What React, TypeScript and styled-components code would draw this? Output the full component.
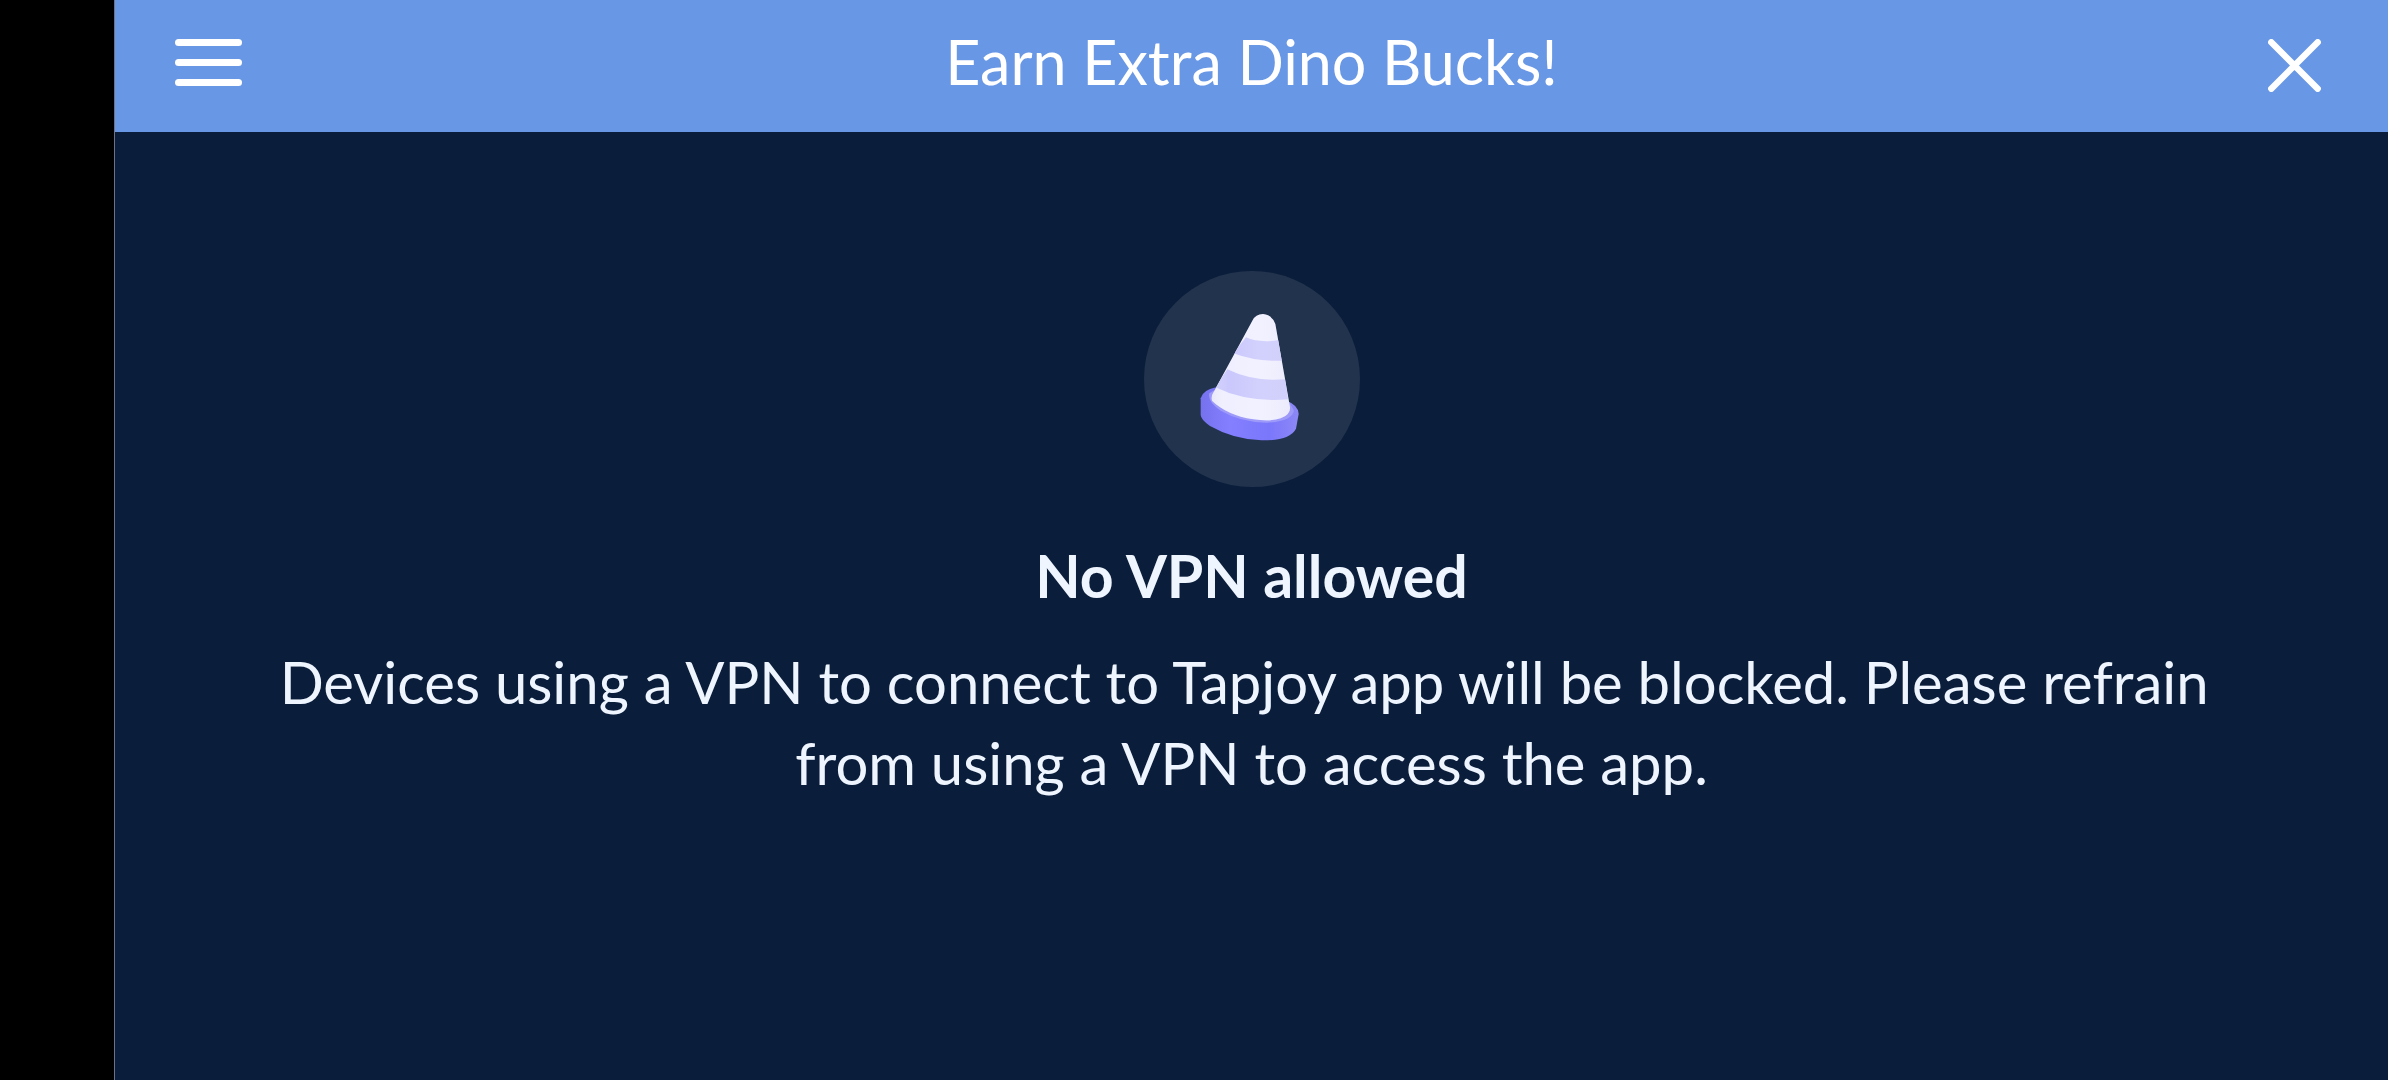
import React from "react";
import styled, { createGlobalStyle } from "styled-components";

const GlobalStyle = createGlobalStyle`
  *, *::before, *::after { box-sizing: border-box; }
  body {
    margin: 0;
    background: #000;
    font-family: Lato, "Liberation Sans", sans-serif;
  }
`;

const Screen = styled.div`
  min-height: 100vh;
  padding-left: 114px;
  display: flex;
  background: #000;
`;

const Panel = styled.div`
  flex: 1;
  min-width: 0;
  display: flex;
  flex-direction: column;
  border-left: 1px solid #6b7385;
  background: #0a1d3a;
  color: #eff5ff;
`;

const Header = styled.header`
  display: grid;
  grid-template-columns: 1fr auto 1fr;
  align-items: start;
  height: 132px;
  padding: 26px 45px 0;
  background: #6897e5;
  color: #fff;
`;

const Title = styled.h1`
  margin: 0;
  font-size: 61px;
  line-height: 72px;
  font-weight: 400;
`;

const IconButton = styled.button<{ $side: "start" | "end" }>`
  justify-self: ${(p) => p.$side};
  display: flex;
  padding: ${(p) => (p.$side === "start" ? "13px 15px" : "13px 22px")};
  border: 0;
  background: none;
  color: inherit;
  cursor: pointer;
`;

const Message = styled.main`
  flex: 1;
  display: flex;
  flex-direction: column;
  align-items: center;
  padding: 139px 150px 48px;
  text-align: center;
`;

const Badge = styled.div`
  display: flex;
  width: 216px;
  height: 216px;
  border-radius: 50%;
  background: #22334e;
`;

const Heading = styled.h2`
  margin: 53px 0 29px;
  font-size: 59px;
  line-height: 72px;
  font-weight: 700;
`;

const Body = styled.p`
  margin: 0;
  font-size: 58px;
  line-height: 81px;
  white-space: break-spaces;
`;

function MenuIcon() {
  return (
    <svg width="67" height="47" viewBox="0 0 67 47" fill="currentColor" aria-hidden="true">
      <rect width="67" height="7" rx="3.5" />
      <rect y="20" width="67" height="7" rx="3.5" />
      <rect y="40" width="67" height="7" rx="3.5" />
    </svg>
  );
}

function CloseIcon() {
  return (
    <svg width="53" height="53" viewBox="0 0 53 53" fill="none" aria-hidden="true">
      <path d="M3.3 3.3 49.7 49.7M49.7 3.3 3.3 49.7" stroke="currentColor" strokeWidth="6.4" strokeLinecap="round" />
    </svg>
  );
}

function ConeIcon() {
  return (
    <svg width="216" height="216" viewBox="-138 -87 648 648" aria-hidden="true">
      <defs>
        <linearGradient id="base" x1="0" x2="1">
          <stop offset="0" stopColor="#7672ee" />
          <stop offset="0.3" stopColor="#837fff" />
          <stop offset="0.7" stopColor="#7b77fb" />
          <stop offset="1" stopColor="#8c88f6" />
        </linearGradient>
        <linearGradient id="shade" x1="0" x2="1">
          <stop offset="0" stopColor="#b9b8da" stopOpacity="0.5" />
          <stop offset="0.3" stopColor="#fff" stopOpacity="0" />
          <stop offset="0.6" stopColor="#fff" stopOpacity="0.15" />
          <stop offset="1" stopColor="#d9d8f4" stopOpacity="0.3" />
        </linearGradient>
        <clipPath id="cone">
          <path d="M187 62Q197 42 219 42Q246 44 256 72L300 322Q302 344 272 355Q240 366 190 358Q110 345 66 302Q62 290 69 280Z" />
        </clipPath>
      </defs>
      <path d="M32 295Q38 270 78 262L290 302Q326 316 326 342L318 386Q300 422 215 421Q130 418 60 378Q32 358 32 345Z" fill="url(#base)" />
      <path d="M58 280Q52 306 92 332Q150 366 230 368Q306 364 312 332L298 306 70 272Z" fill="#9d9af9" />
      <g clipPath="url(#cone)">
        <path d="M30 30H320V380H30Z" fill="#f0efff" />
        <path d="M168 112Q208 130 266 120L276 182Q200 186 130 160Z" fill="#cac8fc" />
        <path d="M112 208Q190 246 286 238L294 298Q170 308 76 262Z" fill="#cac8fc" />
        <path d="M30 30H320V380H30Z" fill="url(#shade)" />
      </g>
    </svg>
  );
}

export default function App() {
  return (
    <>
      <GlobalStyle />
      <Screen>
        <Panel>
          <Header>
            <IconButton $side="start" type="button" aria-label="Menu">
              <MenuIcon />
            </IconButton>
            <Title>Earn Extra Dino Bucks!</Title>
            <IconButton $side="end" type="button" aria-label="Close">
              <CloseIcon />
            </IconButton>
          </Header>
          <Message>
            <Badge>
              <ConeIcon />
            </Badge>
            <Heading>No VPN allowed</Heading>
            <Body>
              Devices using a VPN to connect to Tapjoy app will be blocked. Please refrain from using a VPN to access the app.
            </Body>
          </Message>
        </Panel>
      </Screen>
    </>
  );
}
